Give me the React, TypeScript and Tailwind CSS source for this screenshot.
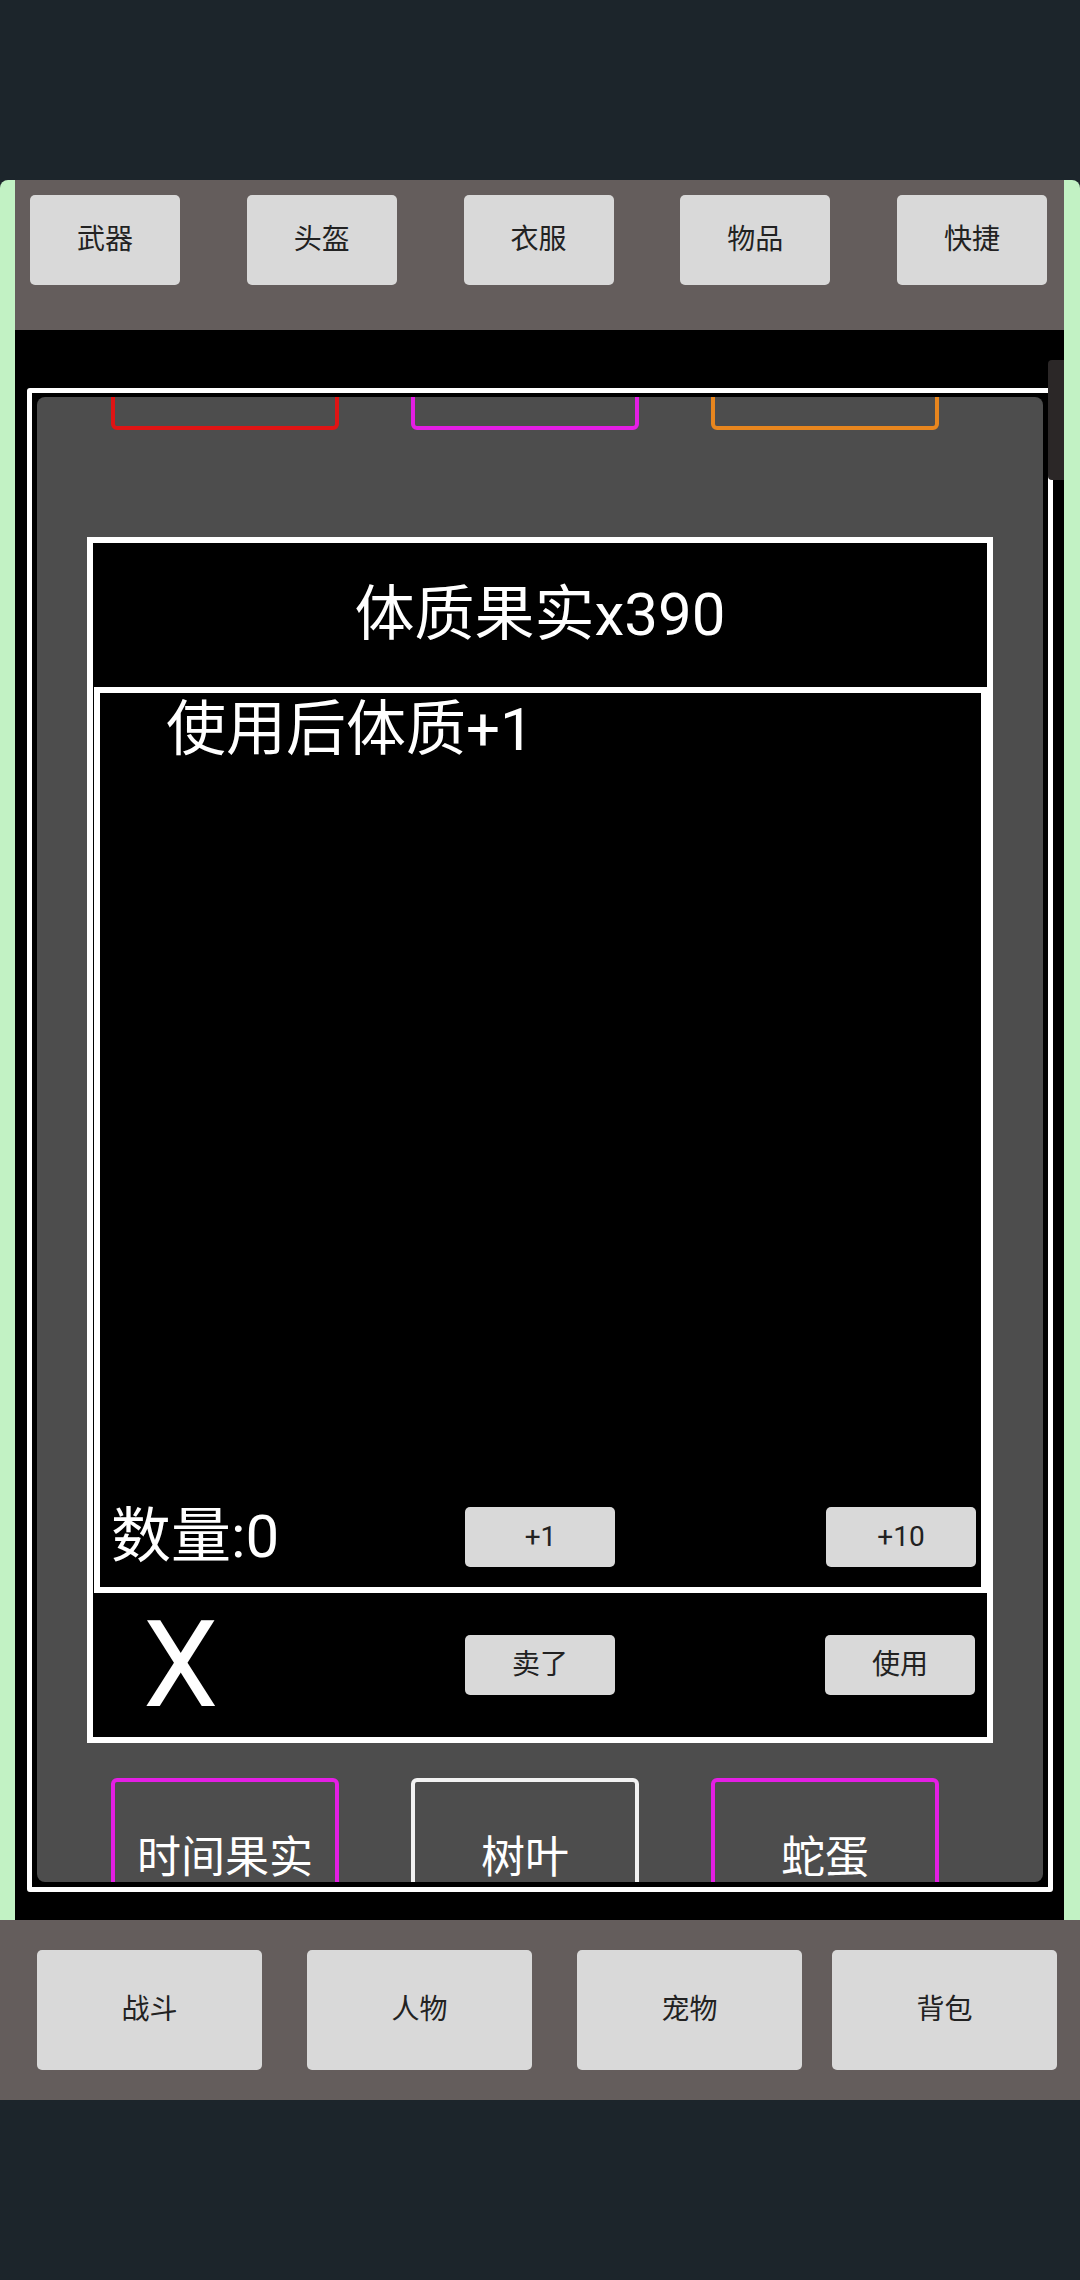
const topTabs = ["武器", "头盔", "衣服", "物品", "快捷"];

const bottomTabs = [
  { label: "战斗", margin: "ml-[37px]" },
  { label: "人物", margin: "ml-[45px]" },
  { label: "宠物", margin: "ml-[45px]" },
  { label: "背包", margin: "ml-[30px]" },
];

const topItems = [
  { label: "", border: "border-[#e01414]" },
  { label: "", border: "border-[#e41ee4]" },
  { label: "", border: "border-[#e8861e]" },
];

const bottomItems = [
  { label: "时间果实", border: "border-[#e41ee4]" },
  { label: "树叶", border: "border-[#f2f2f2]" },
  { label: "蛇蛋", border: "border-[#e41ee4]" },
];

function GrayButton({ label, className = "" }: { label: string; className?: string }) {
  return (
    <button
      className={`flex shrink-0 items-center justify-center rounded-[5px] bg-[#d9d9d9] text-[28px] leading-none text-[#222222] ${className}`}
    >
      {label}
    </button>
  );
}

function ItemRow({
  items,
  className = "",
}: {
  items: { label: string; border: string }[];
  className?: string;
}) {
  return (
    <div className={`flex shrink-0 gap-[72px] pl-[74px] ${className}`}>
      {items.map((item, i) => (
        <div
          key={i}
          className={`flex h-[160px] w-[228px] shrink-0 items-center justify-center rounded-[6px] border-[4px] text-[44px] leading-none text-white ${item.border}`}
        >
          {item.label}
        </div>
      ))}
    </div>
  );
}

function ItemDialog() {
  return (
    <div className="ml-[50px] mt-[107px] flex h-[1206px] w-[906px] shrink-0 flex-col border-[6px] border-white bg-black text-white">
      <div className="flex h-[144px] shrink-0 items-center justify-center text-[60px] leading-none">
        体质果实x390
      </div>

      <div className="ml-[1px] flex flex-1 flex-col border-[6px] border-white">
        <div className="pl-[66px] pt-[2px] text-[60px] leading-[70px]">使用后体质+1</div>
        <div className="flex-1" />
        <div className="grid grid-cols-3 items-center pb-[20px]">
          <span className="pl-[11px] text-[60px] leading-none">数量:0</span>
          <GrayButton label="+1" className="h-[60px] w-[150px] justify-self-center" />
          <GrayButton label="+10" className="mr-[5px] h-[60px] w-[150px] justify-self-end" />
        </div>
      </div>

      <div className="grid h-[144px] shrink-0 grid-cols-3 items-center">
        <span className="pl-[50px] text-[120px] leading-none">X</span>
        <GrayButton label="卖了" className="h-[60px] w-[150px] justify-self-center" />
        <GrayButton label="使用" className="mr-[12px] h-[60px] w-[150px] justify-self-end" />
      </div>
    </div>
  );
}

export default function App() {
  return (
    <div className="flex h-[2280px] w-[1080px] flex-col bg-[#1c252b] font-['Roboto','Noto_Sans_CJK_SC',sans-serif]">
      <div className="h-[180px] shrink-0" />

      <div className="flex h-[1740px] shrink-0 flex-col rounded-t-[8px] bg-[#c2f2c4] pl-[15px] pr-[16px]">
        {/* top tabs */}
        <div className="flex h-[150px] shrink-0 items-start justify-between bg-[#645d5c] pl-[15px] pr-[17px] pt-[15px]">
          {topTabs.map((t) => (
            <GrayButton key={t} label={t} className="h-[90px] w-[150px]" />
          ))}
        </div>

        <div className="relative flex flex-1 flex-col bg-black pl-[12px] pr-[11px] pt-[58px]">
          {/* scroll thumb */}
          <div className="absolute right-0 top-[30px] z-10 h-[120px] w-[16px] rounded-l-[4px] bg-[#2b2727]" />

          <div className="flex h-[1504px] shrink-0 flex-col rounded-[3px] border-[5px] border-white px-[5px] pb-[5px] pt-[4px]">
            <div className="flex flex-1 flex-col overflow-hidden rounded-[8px] bg-[#4d4d4d]">
              <ItemRow items={topItems} className="-mt-[127px]" />
              <ItemDialog />
              <ItemRow items={bottomItems} className="mt-[35px]" />
            </div>
          </div>
        </div>
      </div>

      {/* bottom tabs */}
      <div className="flex h-[180px] shrink-0 items-start bg-[#645d5c] pt-[30px]">
        {bottomTabs.map((t) => (
          <GrayButton key={t.label} label={t.label} className={`h-[120px] w-[225px] ${t.margin}`} />
        ))}
      </div>

      <div className="flex-1" />
    </div>
  );
}
